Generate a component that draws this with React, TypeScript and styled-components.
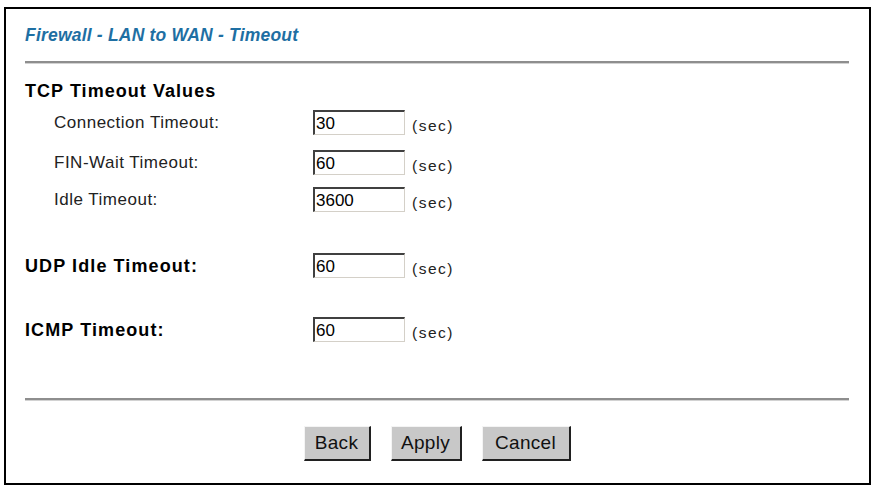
import React from "react";
import styled, { createGlobalStyle } from "styled-components";

const Global = createGlobalStyle`
  html, body { margin: 0; padding: 0; background: #fff; }
  body { font-family: "Liberation Sans", Arial, sans-serif; color: #000; }
`;

const Frame = styled.div`
  box-sizing: border-box;
  margin: 7px 0 0 4px;
  width: 867px;
  height: 478px;
  border: 2px solid #000;
  padding: 0 20px 0 19px;
  display: flex;
  flex-direction: column;
`;

const Title = styled.div`
  margin-top: 16px;
  font-size: 17.5px;
  line-height: 20px;
  letter-spacing: 0.2px;
  font-weight: bold;
  font-style: italic;
  color: #1e6fa3;
`;

const Rule = styled.div<{ $top: number }>`
  margin-top: ${(p) => p.$top}px;
  height: 0;
  border-top: 2px solid #8e8e8e;
  border-bottom: 1px solid #d2d2d2;
`;

const SectionHead = styled.div`
  margin-top: 17px;
  font-size: 18px;
  line-height: 20px;
  letter-spacing: 1.05px;
  font-weight: bold;
`;

const Row = styled.div<{ $top: number }>`
  display: grid;
  grid-template-columns: 288px 92px auto;
  align-items: center;
  margin-top: ${(p) => p.$top}px;
  height: 25px;
`;

const Label = styled.div<{ $bold?: boolean; $indent?: boolean }>`
  padding-left: ${(p) => (p.$indent ? 29 : 0)}px;
  font-size: ${(p) => (p.$bold ? 18 : 17)}px;
  letter-spacing: ${(p) => (p.$bold ? 1.1 : 0.5)}px;
  font-weight: ${(p) => (p.$bold ? "bold" : "normal")};
  color: ${(p) => (p.$bold ? "#000" : "#222")};
  line-height: 20px;
`;

const Field = styled.input`
  box-sizing: border-box;
  width: 92px;
  height: 25px;
  margin: 0;
  padding: 1px 1px 0 1px;
  font-family: "Liberation Sans", Arial, sans-serif;
  font-size: 17px;
  color: #000;
  background: #fff;
  border-style: solid;
  border-width: 2px 1px 1px 2px;
  border-color: #404040 #d4d0c8 #d4d0c8 #404040;
  outline: none;
`;

const Unit = styled.span`
  padding-left: 7px;
  padding-top: 6px;
  font-size: 15.5px;
  letter-spacing: 1.5px;
  color: #222;
`;

const Buttons = styled.div`
  margin-top: 25px;
  display: flex;
  justify-content: center;
  gap: 20px;
  padding-left: 0px;
`;

const Btn = styled.button<{ $w: number }>`
  box-sizing: border-box;
  width: ${(p) => p.$w}px;
  height: 35px;
  margin: 0;
  padding: 0;
  font-family: "Liberation Sans", Arial, sans-serif;
  font-size: 19px;
  letter-spacing: 0.3px;
  color: #111;
  background: #c8c8c8;
  border-style: solid;
  border-width: 1px 2px 2px 1px;
  border-color: #f4f4f4 #202020 #202020 #f4f4f4;
`;

type RowDef = { label: string; value: string; top: number; bold?: boolean; indent?: boolean };

const rows: RowDef[] = [
  { label: "Connection Timeout:", value: "30", top: 9, indent: true },
  { label: "FIN-Wait Timeout:", value: "60", top: 15, indent: true },
  { label: "Idle Timeout:", value: "3600", top: 12, indent: true },
  { label: "UDP Idle Timeout:", value: "60", top: 41, bold: true },
  { label: "ICMP Timeout:", value: "60", top: 39, bold: true },
];

export default function App() {
  return (
    <>
      <Global />
      <Frame>
        <Title>Firewall - LAN to WAN - Timeout</Title>
        <Rule $top={16} />
        <SectionHead>TCP Timeout Values</SectionHead>
        {rows.map((r) => (
          <Row key={r.label} $top={r.top}>
            <Label $bold={r.bold} $indent={r.indent}>
              {r.label}
            </Label>
            <Field defaultValue={r.value} />
            <Unit>(sec)</Unit>
          </Row>
        ))}
        <Rule $top={56} />
        <Buttons>
          <Btn $w={67}>Back</Btn>
          <Btn $w={71}>Apply</Btn>
          <Btn $w={89}>Cancel</Btn>
        </Buttons>
      </Frame>
    </>
  );
}
